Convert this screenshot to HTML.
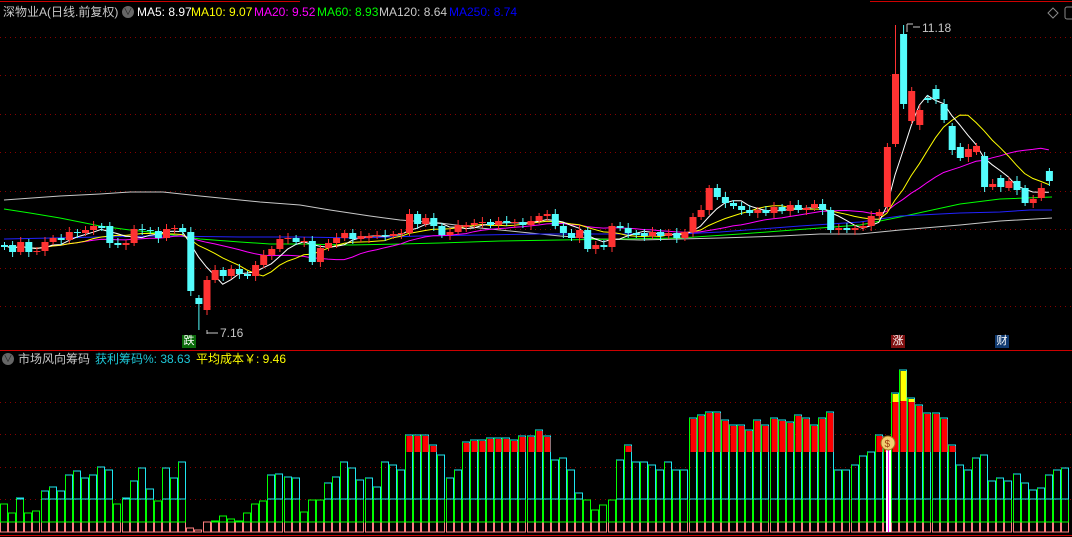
<!DOCTYPE html>
<html><head><meta charset="utf-8">
<style>
html,body{margin:0;padding:0;background:#000;}
body{width:1072px;height:537px;overflow:hidden;position:relative;font-family:"Liberation Sans","Noto Sans CJK SC",sans-serif;}
.t{position:absolute;font-size:12px;white-space:nowrap;line-height:14px;}
svg{position:absolute;left:0;top:0;}
</style></head><body>
<svg id="s" width="1072" height="537" xmlns="http://www.w3.org/2000/svg"></svg>
<div class="t" style="left:3px;top:5px;color:#c8c8c8">深物业A(日线.前复权)</div>
<div class="t" style="left:122px;top:6px;width:12px;height:12px;border-radius:6px;background:#666;color:#222;font-size:9px;line-height:12px;text-align:center">&#8744;</div>
<div class="t" style="left:137px;top:5px;color:#fff">MA5: 8.97</div>
<div class="t" style="left:191px;top:5px;color:#ff0">MA10: 9.07</div>
<div class="t" style="left:254px;top:5px;color:#f0f">MA20: 9.52</div>
<div class="t" style="left:317px;top:5px;color:#0f0">MA60: 8.93</div>
<div class="t" style="left:379px;top:5px;color:#c8c8c8">MA120: 8.64</div>
<div class="t" style="left:449px;top:5px;color:#00f">MA250: 8.74</div>
<div class="t" style="left:2px;top:353px;width:12px;height:12px;border-radius:6px;background:#666;color:#222;font-size:9px;line-height:12px;text-align:center">&#8744;</div>
<div class="t" style="left:18px;top:352px;color:#c8c8c8">市场风向筹码</div>
<div class="t" style="left:95px;top:352px;color:#1ec8d8">获利筹码%: 38.63</div>
<div class="t" style="left:196px;top:352px;color:#ff0">平均成本￥: 9.46</div>
<div class="t" style="left:922px;top:21px;color:#c8c8c8">11.18</div>
<div class="t" style="left:220px;top:326px;color:#c8c8c8">7.16</div>
<div class="t" style="left:182px;top:335px;width:14px;height:13px;background:#0a6a0a;color:#fff;font-size:11px;line-height:13px;text-align:center">跌</div>
<div class="t" style="left:891px;top:335px;width:14px;height:13px;background:#801010;color:#fff;font-size:11px;line-height:13px;text-align:center">涨</div>
<div class="t" style="left:995px;top:335px;width:14px;height:13px;background:#103a70;color:#fff;font-size:11px;line-height:13px;text-align:center">财</div>
<script>
var S=document.getElementById('s'),h='';
function L(x1,y1,x2,y2,c,w,d){h+='<line x1="'+x1+'" y1="'+y1+'" x2="'+x2+'" y2="'+y2+'" stroke="'+c+'" stroke-width="'+(w||1)+'"'+(d?' stroke-dasharray="'+d+'"':'')+'/>';}
function R(x,y,w,hh,f,st){h+='<rect x="'+x+'" y="'+y+'" width="'+w+'" height="'+hh+'" fill="'+(f||'none')+'"'+(st?' stroke="'+st+'"':'')+'/>';}
function P(pts,c){h+='<polyline fill="none" stroke="'+c+'" stroke-width="1" points="'+pts.map(function(p){return p[0]+','+p[1]}).join(' ')+'"/>';}
L(0,1.5,300,1.5,'#c00',1);L(870,1.5,1072,1.5,'#c00',1);
L(0,350.5,1072,350.5,'#c00',1);L(0,535.5,1072,535.5,'#c00',1);
[37,75,114,152,191,229,268,306].forEach(function(y){L(0,y+.5,1072,y+.5,'#800',1,'1 4');});
[402,434,467,499].forEach(function(y){L(0,y+.5,1072,y+.5,'#800',1,'1 4');});
var C=[245,252,242,252,251,242,238,240,232,233,230,226,226,243,243,243,229,230,231,238,229,228,232,291,304,280,270,276,269,274,276,265,255,249,239,238,242,241,262,248,243,238,233,239,236,236,235,236,234,233,214,224,218,226,235,232,225,225,223,222,225,221,223,222,225,221,216,214,226,233,238,230,249,245,247,226,228,233,233,236,232,236,233,238,232,217,210,188,197,203,206,210,213,210,213,207,211,205,210,208,204,210,230,228,230,228,226,216,212];
var O={109:207,110:144,111:34,112:121,113:125,114:98,115:89,116:104,117:126,118:147,119:157,120:152,121:156,122:187,123:178,124:188,125:181,126:188,127:203,128:198,129:171,25:310,24:298};
var E=[147,74,104,91,110,98,99,120,150,158,149,146,187,184,187,181,190,203,199,188,181];
C=C.concat(E);
var X=function(i){return 4+8.1*i;};
function ma(n){var r=[];for(var i=0;i<C.length;i++){var s=0,k=0;for(var j=Math.max(0,i-n+1);j<=i;j++){s+=C[j];k++;}r.push([X(i).toFixed(1),(s/k).toFixed(1)]);}return r;}
P([[4,200],[60,196],[100,194],[130,192],[163,192],[200,196],[260,202],[300,205],[330,210],[370,216],[400,220],[440,223],[480,228],[520,232],[560,236],[600,239],[640,240],[680,239],[720,238],[780,236],[820,234],[860,234],[900,230],[960,225],[1000,221],[1052,218]],'#c8c8c8');
P([[4,209],[30,213],[60,218],[80,222],[100,226],[130,230],[160,233],[200,239],[240,242],[270,244],[300,244],[350,245],[400,244],[440,243],[500,241],[560,240],[620,239],[680,238],[740,234],[780,231],[820,228],[860,225],[900,217],[960,204],[1000,199],[1052,197]],'#0f0');
P([[4,239],[100,237],[160,236],[240,237],[300,237],[360,238],[420,236],[480,235],[540,234],[600,234],[680,234],[720,232],[800,226],[860,222],[900,216],[960,213],[1000,212],[1030,210],[1052,210]],'#22f');
P(ma(20),'#f0f');P(ma(10),'#ff0');P(ma(5),'#fff');
for(var i=0;i<C.length;i++){var c=C[i],o=(O[i]!==undefined)?O[i]:(i?C[i-1]:c);var x=X(i);
 var up=c<o;var col=up?'#ff3232':'#54fcfc';var t=Math.min(o,c),b=Math.max(o,c);
 if(b-t<1){b=t+2;col=(i%2)?'#ff3232':'#54fcfc';}
 var hi=t-3-(i%3),lo=b+3+(i%2)*2;if(i==111)hi=25;if(i==110)hi=25;if(i==24)lo=330;
 L(x+.5,hi,x+.5,lo,col,1);R(x-3,t,7,b-t,col);}
L(907,24,907,32,'#c8c8c8');L(907,24,913,24,'#c8c8c8');L(913,27,920,27,'#c8c8c8');
L(207,330,207,334,'#c8c8c8');L(207,333,218,333,'#c8c8c8');
var T=[504,513,498,513,511,491,487,491,475,471,478,475,467,470,504,498,481,468,489,501,468,478,462,528,530,522,521,516,519,521,513,504,501,475,474,477,478,512,500,500,483,477,462,468,480,478,487,462,465,470,435,435,435,445,455,478,470,442,440,440,438,438,438,440,436,436,430,436,460,458,470,493,500,510,505,500,460,445,462,462,465,470,462,470,470,418,415,412,412,420,425,425,430,420,425,418,420,422,415,418,425,418,412,470,470,465,456,452,435,437,393,370,398,405,413,413,418,445,465,470,458,455,481,478,481,474,483,490,488,475,470,468];
for(var i=0;i<T.length;i++){var x=Math.round(X(i)-4)+.5,w=7,t=T[i];
 var p=Math.max(t,522);R(x,p,w,532-p,null,'#ff8080');
 if(t<522){var g=Math.max(t,499);R(x,g,w,522-g,null,'#00ff00');}
 if(t<499){R(x,t,w,499-t,null,'#1ee6f0');
  if(t<452){R(x+1,t+1,w-1,451-t,'#ff0000');if(t<402)R(x+1,t+1,w-1,Math.min(401,t+30)-t,'#ffff00');}
  L(x,t,x,499,'#00ff00');}
}
R(886,440,5,92,'#fff');L(888.5,440,888.5,532,'#f0f');
h+='<circle cx="888" cy="443" r="7" fill="#f0d070" stroke="#a07020"/><text x="884.5" y="447" font-size="10" fill="#a04010" font-family="Liberation Sans">$</text>';
h+='<path d="M1053 8 L1058 13 L1053 18 L1048 13 Z" fill="none" stroke="#888"/><rect x="1065" y="7" width="10" height="12" rx="2" fill="none" stroke="#888"/>';
S.innerHTML=h;
</script>
</body></html>
